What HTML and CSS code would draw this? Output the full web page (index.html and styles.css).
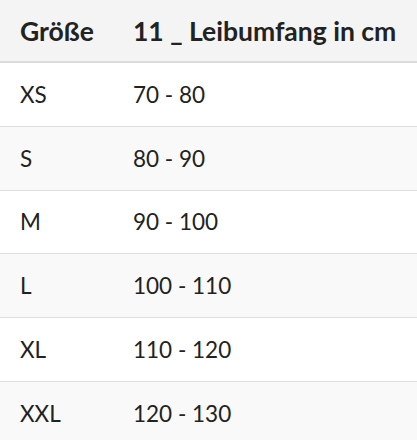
FILE: index.html
```html
<!DOCTYPE html>
<html lang="de">
<head>
<meta charset="utf-8">
<link rel="stylesheet" href="styles.css">
</head>
<body>
<table class="size-table">
  <thead>
    <tr><th class="col-size">Größe</th><th>11 _ Leibumfang in cm</th></tr>
  </thead>
  <tbody>
    <tr><td class="col-size">XS</td><td>70 - 80</td></tr>
    <tr><td class="col-size">S</td><td>80 - 90</td></tr>
    <tr><td class="col-size">M</td><td>90 - 100</td></tr>
    <tr><td class="col-size">L</td><td>100 - 110</td></tr>
    <tr><td class="col-size">XL</td><td>110 - 120</td></tr>
    <tr><td class="col-size">XXL</td><td>120 - 130</td></tr>
  </tbody>
</table>
</body>
</html>
```
FILE: styles.css
```css
html, body {
  margin: 0;
  padding: 0;
  background: #fff;
}
.size-table {
  width: 100%;
  border-collapse: collapse;
  font-family: Lato, "Noto Sans", sans-serif;
  color: #222;
}
.size-table th,
.size-table td {
  text-align: left;
  padding: 0 0 0 20px;
  white-space: nowrap;
}
.size-table th {
  height: 61px;
  font-size: 26.5px;
  font-weight: 700;
  background: #f4f4f4;
  border-bottom: 2px solid #dcdcdc;
}
.size-table td {
  height: 62.8px;
  font-size: 22.5px;
  border-top: 1px solid #dedede;
  font-weight: 400;
}
.size-table thead + tbody tr:first-child td {
  border-top: none;
}
.size-table tbody tr:nth-child(even) td {
  background: #f9f9f9;
}
.size-table .col-size {
  width: 93px;
}
```
